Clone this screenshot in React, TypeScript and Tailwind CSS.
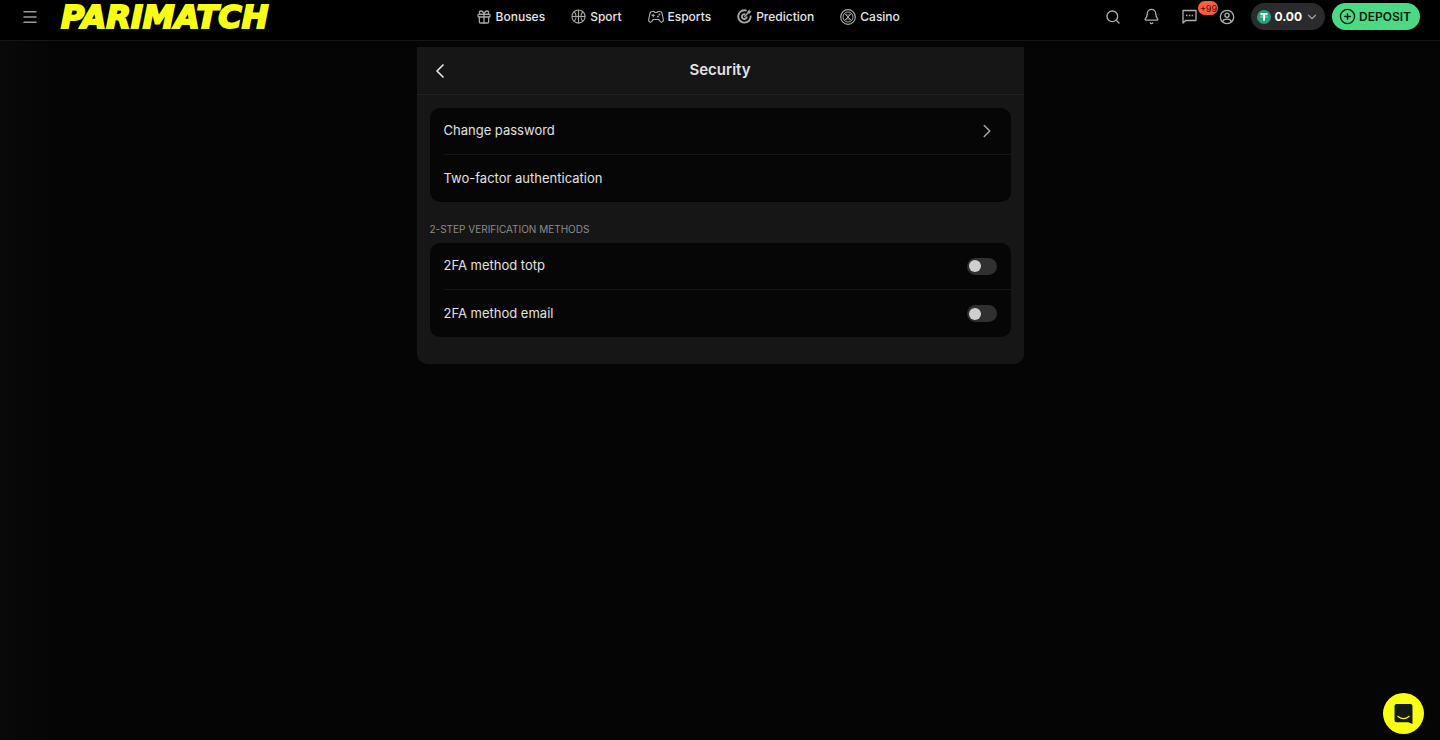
import { useState } from 'react'
import type { ReactNode } from 'react'
import { Bell, ChevronDown, ChevronLeft, ChevronRight, CirclePlus, Gift, Menu, Search } from 'lucide-react'

const SportIcon = () => (
  <svg width="15" height="15" viewBox="0 0 16 16" fill="none" stroke="currentColor" strokeWidth="1.2">
    <circle cx="8" cy="8" r="7" />
    <path d="M8 1v14M1 8h14M3.500 2.800c2.400 3 2.400 7.400 0 10.400M12.500 2.800c-2.400 3-2.400 7.400 0 10.400" />
  </svg>
)

const EsportsIcon = () => (
  <svg width="16" height="14" viewBox="0 0 16 14" fill="none" stroke="currentColor" strokeWidth="1.2" strokeLinecap="round" strokeLinejoin="round">
    <path d="M4 1.5h2l1 1h2l1-1h2c1.2 0 1.8.8 2.1 2l1.200 6c.4 2.2-1.700 3.4-3.100 1.8L10.700 9.500H5.300L3.800 11.300C2.400 12.900.3 11.700.7 9.500l1.200-6c.3-1.200.9-2 2.100-2Z" />
    <path d="M4 5.500h2.400M5.200 4.300v2.400" />
    <circle cx="11.400" cy="4.500" r=".4" fill="currentColor" />
    <circle cx="9.900" cy="6.500" r=".4" fill="currentColor" />
  </svg>
)

const PredictionIcon = () => (
  <svg width="15" height="15" viewBox="0 0 16 16" fill="none" stroke="currentColor" strokeWidth="2">
    <path d="M10.200 1.700A6.600 6.600 0 1 0 14.500 7" />
    <path d="M8.600 5.600A2.600 2.600 0 1 0 10.400 8" />
    <path d="M7.800 8.200 12 4" strokeWidth="1.600" />
    <path d="M11.300 4.700V2.500L13.500.5v2h2l-2 2.200Z" fill="currentColor" stroke="none" />
  </svg>
)

const CasinoIcon = () => (
  <svg width="16" height="16" viewBox="0 0 16 16" fill="none" stroke="currentColor">
    <circle cx="8" cy="8" r="7.300" strokeWidth="1.200" />
    <circle cx="8" cy="8" r="5" />
    <path d="m4.500 4.500 7 7M11.500 4.500l-7 7" />
    <path d="M6 4.800 8 6.500l2-1.700M6 11.200l2-1.700 2 1.700" strokeWidth=".8" />
  </svg>
)

const ChatIcon = () => (
  <svg width="15" height="15" viewBox="0 0 15 15" fill="none" stroke="currentColor" strokeWidth="1.300" strokeLinejoin="round">
    <path d="M1 14V1.500h13v10H3.500L1 14Z" />
    <path d="M4 6.500h1.500M6.800 6.500h1.500M9.600 6.500h1.500" strokeWidth="1.500" />
  </svg>
)

const ProfileIcon = () => (
  <svg width="16" height="16" viewBox="0 0 16 16" fill="none" stroke="currentColor" strokeWidth="1.300">
    <circle cx="8" cy="8" r="6.700" />
    <circle cx="8" cy="6.200" r="2.100" />
    <path d="M3.500 13c.6-2 2.300-2.800 4.500-2.800s3.900.8 4.500 2.800" />
  </svg>
)

const TetherIcon = () => (
  <svg width="14" height="14" viewBox="0 0 14 14">
    <circle cx="7" cy="7" r="7" fill="#26a17b" />
    <path d="M3.500 3h7v1.800H8v6H6v-6H3.500Z" fill="#fff" />
    <ellipse cx="7" cy="6.600" rx="3.700" ry=".8" fill="none" stroke="#fff" strokeWidth=".4" />
  </svg>
)

const SupportIcon = () => (
  <svg width="20" height="22" viewBox="0 0 20 22">
    <path d="M2.500 1h14A2 2 0 0 1 18.500 3v18L14.300 19.300H2.500A2 2 0 0 1 .5 17.300V3a2 2 0 0 1 2-2Z" fill="#161a12" />
    <path d="M4 13.500c3.400 2.600 7.600 2.600 11 0" fill="none" stroke="#f8ff13" strokeWidth="1.300" strokeLinecap="round" />
  </svg>
)

const navItems = [
  { label: 'Bonuses', icon: <Gift size={16} strokeWidth={1.9} /> },
  { label: 'Sport', icon: <SportIcon /> },
  { label: 'Esports', icon: <EsportsIcon /> },
  { label: 'Prediction', icon: <PredictionIcon /> },
  { label: 'Casino', icon: <CasinoIcon /> },
]

function Header() {
  return (
    <header className="flex items-center justify-between border-b border-[#161616] bg-black pt-[3px] pr-5 pb-[10px] pl-[21px]">
      <div className="flex items-center gap-[22px]">
        <button type="button" aria-label="Menu" className="text-[#9a9a9a]">
          <Menu size={18} strokeWidth={2} />
        </button>
        <a
          href="#"
          className="flex h-[27px] w-[229px] items-center font-['DejaVu_Sans'] text-[32px] leading-none font-bold whitespace-nowrap text-[#f8ff13] italic [-webkit-text-stroke:2px_#f8ff13]"
        >
          PARIMATCH
        </a>
      </div>

      <nav className="mr-5 flex items-center gap-[26px]">
        {navItems.map((item) => (
          <a key={item.label} href="#" className="flex items-center gap-1 text-[12px] leading-5 font-medium text-[#e6e6e6]">
            <span className="text-[#a8a8a8]">{item.icon}</span>
            {item.label}
          </a>
        ))}
      </nav>

      <div className="flex items-center text-[#b0b0b0]">
        <div className="mr-4 flex items-center gap-[22px]">
          <button type="button" aria-label="Search">
            <Search size={16} strokeWidth={2} />
          </button>
          <button type="button" aria-label="Notifications">
            <Bell size={17} strokeWidth={1.8} />
          </button>
          <button type="button" aria-label="Messages" className="relative">
            <ChatIcon />
            <span className="absolute -top-2 left-4 flex h-[14px] w-5 items-center justify-center rounded-full bg-[#ff5f3c] text-[9px] leading-none text-[#3a0f06]">
              +99
            </span>
          </button>
          <button type="button" aria-label="Profile">
            <ProfileIcon />
          </button>
        </div>
        <button type="button" className="mr-[7px] flex h-[27px] items-center gap-[3px] rounded-full bg-[#2b2b2d] px-[6px] text-[12px] font-bold text-white">
          <TetherIcon />
          0.00
          <ChevronDown size={14} strokeWidth={2} className="text-[#a3a3a3]" />
        </button>
        <button type="button" className="flex h-[27px] items-center gap-[3px] rounded-full bg-[#4bd983] pr-[9px] pl-[7px] text-[12px] font-semibold text-[#06200f]">
          <CirclePlus size={17} strokeWidth={2} />
          DEPOSIT
        </button>
      </div>
    </header>
  )
}

function List({ children }: { children: ReactNode }) {
  return <div className="overflow-hidden rounded-[10px] bg-[#060606] pl-[14px]">{children}</div>
}

function MethodSwitch({ id, label }: { id: string; label: string }) {
  const [enabled, setEnabled] = useState(false)

  return (
    <div className="flex h-[47px] items-center justify-between border-b border-[#161616] pr-[14px] last:border-b-0">
      <label htmlFor={id}>{label}</label>
      <input
        id={id}
        type="checkbox"
        role="switch"
        checked={enabled}
        onChange={(e) => setEnabled(e.target.checked)}
        className="flex h-[17px] w-[30px] cursor-pointer appearance-none items-center rounded-full bg-[#303030] px-[2px] before:size-3 before:rounded-full before:bg-[#cfcfcf] checked:justify-end checked:bg-[#4bd983]"
      />
    </div>
  )
}

function App() {
  return (
    <div className="flex min-h-screen flex-col bg-[#050505] bg-linear-to-r from-[#090909] to-[#050505] to-4% font-[Inter,sans-serif]">
      <Header />

      <main className="mx-auto mt-[6px] w-full max-w-[607px] rounded-b-[10px] bg-[#161616] pb-[27px] text-[13px] text-[#e2e2e2]">
        <div className="grid h-12 grid-cols-3 items-center border-b border-[#212121] px-[11px]">
          <button type="button" aria-label="Back" className="justify-self-start">
            <ChevronLeft size={24} strokeWidth={1.7} />
          </button>
          <h1 className="text-center text-[15px] font-semibold">Security</h1>
        </div>

        <div className="px-[13px] pt-[13px]">
          <List>
            <button type="button" className="flex h-[47px] w-full items-center justify-between border-b border-[#161616] pr-[13px]">
              Change password
              <ChevronRight size={22} strokeWidth={1.7} className="text-[#a3a3a3]" />
            </button>
            <div className="flex h-[47px] items-center">Two-factor authentication</div>
          </List>

          <h2 className="mt-[19px] mb-[6px] text-[10px] leading-4 text-[#8c8c8c]">2-STEP VERIFICATION METHODS</h2>
          <List>
            <MethodSwitch id="totp" label="2FA method totp" />
            <MethodSwitch id="email" label="2FA method email" />
          </List>
        </div>
      </main>

      <button
        type="button"
        aria-label="Support chat"
        className="fixed right-4 bottom-[6px] flex size-[41px] items-center justify-center rounded-full bg-[#f8ff13]"
      >
        <SupportIcon />
      </button>
    </div>
  )
}

export default App
